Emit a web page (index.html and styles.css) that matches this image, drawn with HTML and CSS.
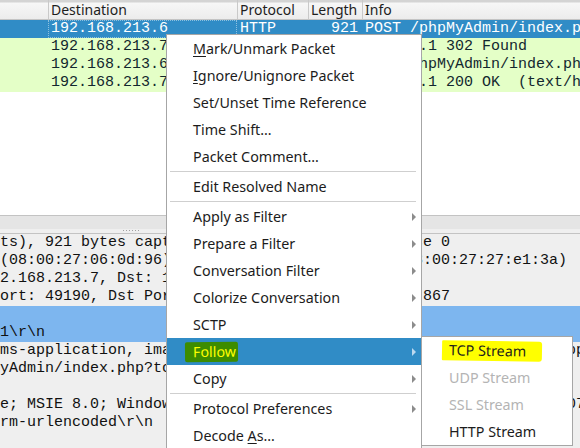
FILE: index.html
```html
<!DOCTYPE html>
<html>
<head>
<meta charset="utf-8">
<link rel="stylesheet" href="styles.css">
</head>
<body>
<div class="app">
  <div class="cols list-header">
    <div class="hcell first"></div>
    <div class="hcell">Destination</div>
    <div class="hcell">Protocol</div>
    <div class="hcell">Length</div>
    <div class="hcell">Info</div>
  </div>
  <div class="list">
    <div class="cols row selected">
      <div class="cell"></div>
      <div class="cell focus">192.168.213.6</div>
      <div class="cell">HTTP</div>
      <div class="cell num">921</div>
      <div class="cell">POST /phpMyAdmin/index.php HTTP/1.1  (application/x-www-form-urlencoded)</div>
    </div>
    <div class="cols row">
      <div class="cell"></div>
      <div class="cell">192.168.213.7</div>
      <div class="cell">HTTP</div>
      <div class="cell num">687</div>
      <div class="cell">HTTP/1.1 302 Found</div>
    </div>
    <div class="cols row">
      <div class="cell"></div>
      <div class="cell">192.168.213.6</div>
      <div class="cell">HTTP</div>
      <div class="cell num">731</div>
      <div class="cell">GET /phpMyAdmin/index.php?token=3d5c0f8e2a1b HTTP/1.1</div>
    </div>
    <div class="cols row">
      <div class="cell"></div>
      <div class="cell">192.168.213.7</div>
      <div class="cell">HTTP</div>
      <div class="cell num">1311</div>
      <div class="cell">HTTP/1.1 200 OK  (text/html)</div>
    </div>
  </div>
  <div class="hscroll"></div>
  <div class="splitter"><span class="grip"></span></div>
  <div class="details">
    <div class="dline">ts), 921 bytes captured (7368 bits) on interface 0</div>
    <div class="dline">(08:00:27:06:0d:96), Dst: PcsCompu_27:e1:3a (08:00:27:27:e1:3a)</div>
    <div class="dline">2.168.213.7, Dst: 192.168.213.6</div>
    <div class="dline">ort: 49190, Dst Port: 80, Seq: 1, Ack: 1, Len: 867</div>
    <div class="dline sel"> </div>
    <div class="dline sel">1\r\n</div>
    <div class="dline">ms-application, image/gif, application/xaml+xml, image/pjpeg, application/x-ms-xbap</div>
    <div class="dline">yAdmin/index.php?token=3d5c0f8e2a1b4c7d9e\r\n</div>
    <div class="dline"> </div>
    <div class="dline">e; MSIE 8.0; Windows NT 6.1; Trident/4.0; SLCC2; .NET CLR 2.0.50727)</div>
    <div class="dline">rm-urlencoded\r\n</div>
    <div class="dline"> </div>
  </div>

  <div class="menu">
    <div class="mi"><span><u>M</u>ark/Unmark Packet</span></div>
    <div class="mi"><span><u>I</u>gnore/Unignore Packet</span></div>
    <div class="mi"><span>Set/Unset Time Reference</span></div>
    <div class="mi"><span>Time Shift…</span></div>
    <div class="mi"><span>Packet Comment…</span></div>
    <div class="sep"></div>
    <div class="mi"><span>Edit Resolved Name</span></div>
    <div class="sep"></div>
    <div class="mi sub"><span>Apply as Filter</span></div>
    <div class="mi sub"><span>Prepare a Filter</span></div>
    <div class="mi sub"><span>Conversation Filter</span></div>
    <div class="mi sub"><span>Colorize Conversation</span></div>
    <div class="mi sub"><span>SCTP</span></div>
    <div class="mi sub active"><span class="mark-green">Follow</span></div>
    <div class="mi sub"><span>Copy</span></div>
    <div class="sep"></div>
    <div class="mi sub"><span>Protocol Preferences</span></div>
    <div class="mi"><span>Decode <u>A</u>s…</span></div>
  </div>

  <div class="submenu">
    <div class="smi"><span class="mark-yellow">TCP Stream</span></div>
    <div class="smi disabled"><span>UDP Stream</span></div>
    <div class="smi disabled"><span>SSL Stream</span></div>
    <div class="smi"><span>HTTP Stream</span></div>
  </div>
</div>
</body>
</html>
```

FILE: styles.css
```css
* { box-sizing: border-box; }
html, body { margin: 0; padding: 0; }
body {
  width: 580px;
  height: 448px;
  overflow: hidden;
  background: #ffffff;
  font-family: "Noto Sans", "DejaVu Sans", sans-serif;
}
.app {
  position: relative;
  width: 580px;
  height: 448px;
  display: flex;
  flex-direction: column;
  overflow: hidden;
}
.cols {
  display: grid;
  grid-template-columns: 48px 189px 71px 54px 1fr;
}
.list-header {
  height: 20px;
  flex: none;
  background: linear-gradient(#d4d4d4 0, #d4d4d4 2px, #f7f7f7 3px, #ececec 100%);
  border-bottom: 1px solid #c4c4c4;
  font-size: 14px;
  line-height: 19px;
  color: #1e1e1e;
}
.hcell {
  border-left: 1px solid #c9c9c9;
  padding-left: 2px;
  white-space: nowrap;
  overflow: hidden;
}
.hcell.first { border-left: none; }
.list {
  height: 195px;
  flex: none;
  background: #ffffff;
}
.row {
  height: 18px;
  font-family: "Liberation Mono", monospace;
  font-size: 15px;
  line-height: 18px;
  background: #e4ffc7;
  color: #12272e;
}
.row.selected {
  background: #308cc6;
  color: #ffffff;
}
.cell {
  padding-left: 3px;
  white-space: pre;
  overflow: hidden;
}
.cell.num {
  text-align: right;
  padding-right: 4px;
}
.cell.focus {
  outline: 1px dotted rgba(255, 255, 255, 0.45);
  outline-offset: -1px;
}
.hscroll {
  height: 14px;
  flex: none;
  background: #e5e5e5;
  border-top: 1px solid #c3c3c3;
}
.splitter {
  height: 4px;
  flex: none;
  background: #efefef;
  display: flex;
  padding-left: 123px;
  padding-top: 1px;
}
.grip {
  width: 18px;
  height: 1px;
  background: repeating-linear-gradient(90deg, #a0a0a0 0, #a0a0a0 1px, transparent 1px, transparent 3px);
}
.details {
  flex: 1;
  background: #efefef;
  border-top: 1px solid #c3c3c3;
  font-family: "Liberation Mono", monospace;
  font-size: 15px;
  line-height: 18px;
  color: #111111;
}
.dline {
  height: 18px;
  white-space: pre;
  overflow: hidden;
}
.dline.sel { background: #7db6ef; }

/* context menu */
.menu {
  position: absolute;
  left: 166px;
  top: 34px;
  width: 256px;
  background: #ffffff;
  border: 1px solid #a6a6a6;
  font-size: 14.3px;
  color: #1c1c1c;
}
.mi {
  height: 27px;
  display: flex;
  align-items: center;
  padding-left: 26px;
  position: relative;
  white-space: nowrap;
}
.mi u { text-decoration-thickness: 1px; text-underline-offset: 2px; }
.mi.sub::after {
  content: "";
  position: absolute;
  right: 5px;
  top: 10px;
  border-left: 4px solid #8c8c8c;
  border-top: 4px solid transparent;
  border-bottom: 4px solid transparent;
}
.mi.active { background: #308cc6; }
.mi.active::after { border-left-color: #bcd8ef; }
.sep {
  height: 1px;
  background: #cfcfcf;
  margin: 1px 5px 1px 3px;
}
.mark-green {
  display: inline-block;
  background: #3d8c00;
  color: #ffff00;
  line-height: 20px;
  padding: 0 2px 0 8px;
  margin-left: -8px;
  border-radius: 2px;
  transform: rotate(-0.6deg);
}

/* submenu */
.submenu {
  position: absolute;
  left: 421px;
  top: 336px;
  width: 152px;
  background: #ffffff;
  border: 1px solid #a6a6a6;
  font-size: 14.3px;
  color: #1c1c1c;
}
.smi {
  height: 27px;
  display: flex;
  align-items: center;
  padding-left: 27px;
  white-space: nowrap;
}
.smi.disabled { color: #b4b4b4; }
.mark-yellow {
  display: inline-block;
  background: #ffff00;
  line-height: 20px;
  padding: 0 16px 0 7px;
  margin-left: -7px;
  border-radius: 1px 3px 3px 1px;
  transform: rotate(1deg);
}
```
